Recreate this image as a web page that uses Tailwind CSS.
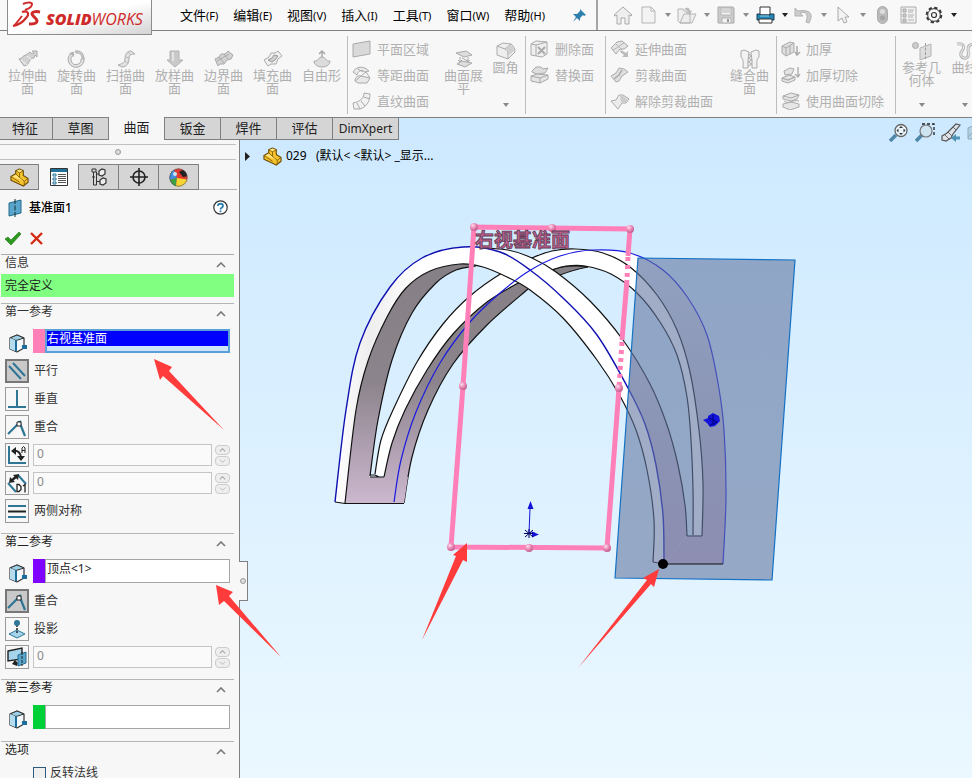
<!DOCTYPE html>
<html lang="zh-CN">
<head>
  <meta charset="UTF-8" />
  <meta name="viewport" content="width=device-width, initial-scale=1.0"/>
  <title>SOLIDWORKS - 029</title>
  <script src="https://cdn.jsdelivr.net/npm/@tailwindcss/browser@4"></script>
</head>
<body class="h-screen overflow-hidden flex flex-col bg-[#f7f7f7] font-['Noto_Sans','Noto_Sans_CJK_SC',sans-serif] text-[13px] text-[#222]">

  <!-- shared icons -->
  <svg class="hidden">
    <symbol id="i-part" viewBox="0 0 20 20"><path d="M1 9l5-3V3l4-2 4 2v5l5 3v4l-5 4L1 13z" fill="#f5c32c" stroke="#6b4d08" stroke-width="1.200" stroke-linejoin="round"/><path d="M6 3l4 2v5l5 4v5M10 5l4-2M1 9l9 6M15 14l4-3M6 6l4 4" fill="none" stroke="#8a640b"/><path d="M7 3l3-1.500L13 3l-3 1.500zM2.500 9L6 7l4 3.500 4 3.300z" fill="#ffe680"/></symbol>
    <symbol id="i-cube" viewBox="0 0 20 20"><path d="M2 5l7-3 7 3v10l-7 4-7-3z" fill="#f4f8fb" stroke="#333" stroke-width="1.200" stroke-linejoin="round"/><path d="M2 5l7-3 7 3-8 2.500z" fill="#9bd0e8" stroke="#333"/><path d="M2 5l5 2v11l-5-2z" fill="#b5dcee"/><path d="M8 7.500V18" stroke="#1b6e9c" stroke-width="2"/><path d="M14 12h5v4h-5z" fill="#1b6e9c"/></symbol>
    <symbol id="i-coin" viewBox="0 0 20 20"><path d="M1 17L14 4M12 4l6 15" stroke="#2f7596" stroke-width="2.200" fill="none"/><path d="M10 5h4v4h-4z" fill="#fff" stroke="#222"/></symbol>
    <symbol id="i-up" viewBox="0 0 10 6"><path d="M1 5l4-4 4 4" fill="none" stroke="#777" stroke-width="1.600"/></symbol>
    <symbol id="i-down" viewBox="0 0 10 6"><path d="M1 1l4 4 4-4" fill="none" stroke="#999" stroke-width="1.400"/></symbol>
    <symbol id="i-caret" viewBox="0 0 6 4"><path d="M0 0h6L3 4z" fill="currentColor"/></symbol>
    <symbol id="r-extrude" viewBox="0 0 20 18"><path d="M1 9c3 0 4-4 7-4l4-3 2 2 2-1-2-2h5v6l-2-2-1 3c-4 0-5 5-7 7l-3 1z" fill="#d2d2d2" stroke="#aaa"/><path d="M3 10l6 5M9 6l5 4" stroke="#f5f5f5"/></symbol>
    <symbol id="r-revolve" viewBox="0 0 20 18"><path d="M6 2a8 8 0 1 0 11 6l-3 1a5 5 0 1 1-7-4z" fill="#e2e2e2" stroke="#aaa"/><path d="M8 1c6-1 9 3 9 8l-2-1c0-3-2-5-6-5z" fill="#ccc" stroke="#b0b0b0"/><path d="M2 3l5-1v5z" fill="#b5b5b5"/></symbol>
    <symbol id="r-sweep" viewBox="0 0 20 18"><path d="M2 15c3-1 7-2 7-6 0-5 2-8 6-8l4 3c-4 0-6 1-6 4 0 5-2 9-7 9z" fill="#e2e2e2" stroke="#aaa"/><path d="M12 2l3 3M10 7l3 1M8 11l4 2" stroke="#bbb"/></symbol>
    <symbol id="r-loft" viewBox="0 0 20 18"><path d="M5 1h9v9h4l-8 7-8-7h3z" fill="#c9c9c9" stroke="#b2b2b2"/><path d="M8 2v9" stroke="#e4e4e4" stroke-width="2"/></symbol>
    <symbol id="r-bound" viewBox="0 0 20 18"><path d="M1 9l4-2 2-3 4 0 3-3 5 4-2 4-4 1-3 4-4 0-2 2z" fill="#d2d2d2" stroke="#aaa"/><path d="M5 7l5 6M10 4l5 6M3 11l12-7" stroke="#aaa"/></symbol>
    <symbol id="r-fill" viewBox="0 0 20 18"><path d="M1 10l5-3 2-4 4 0 3-2 4 5-4 3-2 5-5 0-3 2z" fill="#f1f1f1" stroke="#aaa"/><path d="M5 10l4-2 2-3 4 1-3 4-3 2z" fill="#d0d0d0" stroke="#999"/></symbol>
    <symbol id="r-free" viewBox="0 0 20 18"><path d="M10 10V2M7 4l3-3 3 3" stroke="#aaa" stroke-width="1.500" fill="none"/><path d="M2 11c4 1 4-4 8-4s4 5 8 4c0 3-3 6-8 6s-8-3-8-6z" fill="#dcdcdc" stroke="#aaa"/></symbol>
    <symbol id="r-planar" viewBox="0 0 20 18"><path d="M1 4l17-3v13L1 17z" fill="#d9d9d9" stroke="#aaa"/></symbol>
    <symbol id="r-offset" viewBox="0 0 20 18"><path d="M1 6c2-4 9-8 16-1l-4 1c-4-3-7-1-8 3zM3 15c0-4 3-6 6-5l9 2-3 5H6z" fill="#e8e8e8" stroke="#aaa"/><path d="M6 3l5 3M9 10l5-4 4 6M3 15l6-5" stroke="#aaa" fill="none"/></symbol>
    <symbol id="r-ruled" viewBox="0 0 20 18"><path d="M12 1l6 1c0 8-4 13-10 15H2l-1-6c6-1 11-4 11-10z" fill="#f2f2f2" stroke="#aaa"/><path d="M12 5l6 2M9 9l4 5M5 11l3 6" stroke="#aaa"/></symbol>
    <symbol id="r-flat" viewBox="0 0 20 18"><path d="M2 3l10-2 6 4-8 2zM3 14l5-3 10 2-7 4z" fill="#ddd" stroke="#aaa"/><path d="M6 7v5M14 7v5M4 10l2 2 2-2M12 10l2 2 2-2M8 8l6 3" fill="none" stroke="#aaa"/></symbol>
    <symbol id="r-fillet" viewBox="0 0 20 18"><path d="M1 4l6-3 8 1c3 2 4 5 4 8l-7 7-11-4z" fill="#eee" stroke="#aaa"/><path d="M1 4l8 3c3 1 3 5 3 10M9 7l6-5" stroke="#aaa" fill="none"/><path d="M9 7l6-4c2 1 3 4 3 6l-6 5c0-4 0-6-3-7z" fill="#d0d0d0"/></symbol>
    <symbol id="r-delete" viewBox="0 0 20 18"><path d="M1 4l5-3 11 1v12l-5 3-11-2z" fill="#efefef" stroke="#aaa"/><path d="M1 4l5 1 11-3M6 5v11" stroke="#aaa" fill="none"/><path d="M8 7l7 7M15 7l-7 7" stroke="#aaa" stroke-width="2"/></symbol>
    <symbol id="r-replace" viewBox="0 0 20 18"><path d="M1 10l6-2 11 1v4l-8 4-9-2z" fill="#e4e4e4" stroke="#aaa"/><path d="M2 5l4-4h5l2 2 5-1-3 5-8 1-5-2z" fill="#ddd" stroke="#aaa"/><path d="M1 10l9 2 8-3M10 12v5" fill="none" stroke="#aaa"/></symbol>
    <symbol id="r-extend" viewBox="0 0 20 18"><path d="M1 8l6-6 5-1 6 5-4 3-4 0-4 5z" fill="#e4e4e4" stroke="#aaa"/><path d="M11 10l5 3 2-2v6h-6l2-2-4-3z" fill="#bbb"/><path d="M6 4l6 6M3 10l5-3 6-4" stroke="#b5b5b5" fill="none"/></symbol>
    <symbol id="r-trim" viewBox="0 0 20 18"><path d="M1 10l5-3 3-5 5 1 4 3-6 4-3 5-3 1z" fill="#e0e0e0" stroke="#aaa"/><path d="M4 13l5-4 3-5" stroke="#aaa" fill="none" stroke-width="1.500"/></symbol>
    <symbol id="r-untrim" viewBox="0 0 20 18"><path d="M1 9l5-1 3-5 4 0 6 4-3 4-4 0-4 6z" fill="#ececec" stroke="#aaa"/><path d="M10 4l3 0 5 4-3 3-4-1z" fill="#ccc"/></symbol>
    <symbol id="r-knit" viewBox="0 0 20 20"><path d="M1 2l3-1 5 2c0 4-1 6-1 9v7H3c0-5 1-8-2-11zM19 2l-3-1-5 2c0 4 1 6 1 9v7h5c0-5-1-8 2-11z" fill="#f2f2f2" stroke="#aaa"/><path d="M8 5l4 2-4 2 4 2-4 2 4 2-4 2" stroke="#aaa" fill="none"/></symbol>
    <symbol id="r-thick" viewBox="0 0 20 18"><path d="M1 6l8-4 4 1v9l-8 4-4-3z" fill="#ddd" stroke="#aaa"/><path d="M1 6l4 2 8-5M5 8v8M9 6v8" stroke="#aaa" fill="none"/><path d="M16 6v9M14 12l2 3 3-3" stroke="#aaa" stroke-width="1.500" fill="none"/></symbol>
    <symbol id="r-thickcut" viewBox="0 0 20 18"><path d="M1 12l7-3 6 2v3l-7 3-6-2zM3 5l6-3 4 1-2 5-7 1z" fill="#e4e4e4" stroke="#aaa"/><path d="M17 1v10M14 8l3 3 2-3M1 12l6 2 7-3" stroke="#aaa" stroke-width="1.300" fill="none"/></symbol>
    <symbol id="r-cutwith" viewBox="0 0 20 18"><path d="M2 12l8-2 8 2v3l-9 3-7-3zM2 4l8-3 8 2-2 4-6 2-8-2z" fill="#e6e6e6" stroke="#aaa"/><path d="M3 9c5 4 9-2 15 0M2 4l8 2 8-3" stroke="#aaa" fill="none"/></symbol>
    <symbol id="r-ref" viewBox="0 0 20 18"><circle cx="3.500" cy="3.500" r="3" fill="#ccc" stroke="#aaa"/><path d="M8 6l11-4v12L8 18z" fill="#ddd" stroke="#b5b5b5"/><path d="M13.500 1v16" stroke="#999" stroke-dasharray="3 1.500"/></symbol>
    <symbol id="r-curve" viewBox="0 0 20 18"><path d="M2 2c7-1 8 3 5 7s0 8 4 7 2-6 2-9 2-5 6-5" fill="none" stroke="#b5b5b5" stroke-width="3"/><path d="M2 2c7-1 8 3 5 7s0 8 4 7 2-6 2-9 2-5 6-5" fill="none" stroke="#f7f7f7"/></symbol>
  </svg>

  <!-- title / menu bar -->
  <header class="relative z-20 flex shrink-0 h-[31px] items-center border-b border-[#808080] bg-[#f8f8f8]">
    <a href="#" aria-label="SOLIDWORKS" class="self-start ml-[7px] w-[145px] h-[35px] shrink-0 flex items-start border border-t-0 border-[#8c8c8c] bg-linear-to-br from-white from-50% to-[#d4d4d4] text-[#cf2a2a] pl-1">
      <svg class="w-[30px] h-[29px]" viewBox="0 0 30 29" fill="none" stroke="#cf2a2a"><path d="M11 4c4-2 9-2 9 0 0 3-4 5-7 6" stroke-width="2"/><path d="M10 12c6-2 8 2 4 6-3 4-8 7-13 8" stroke-width="2.200"/><path d="M10 16L2 26" stroke-width="2"/><path d="M28 12c-5-1-8 0-8 2s5 4 5 7c0 2-3 3-8 3" stroke-width="3"/></svg>
      <span class="mt-[9px] ml-1 font-['Open_Sans',sans-serif] italic text-[16px] leading-[21px]"><b class="font-extrabold">SOLID</b>WORKS</span>
    </a>
    <nav class="ml-[28px] flex gap-[15px] whitespace-nowrap text-black leading-[20px]">
      <a href="#">文件<span class="text-[11px]">(F)</span></a>
      <a href="#">编辑<span class="text-[11px]">(E)</span></a>
      <a href="#">视图<span class="text-[11px]">(V)</span></a>
      <a href="#">插入<span class="text-[11px]">(I)</span></a>
      <a href="#">工具<span class="text-[11px]">(T)</span></a>
      <a href="#">窗口<span class="text-[11px]">(W)</span></a>
      <a href="#">帮助<span class="text-[11px]">(H)</span></a>
    </nav>
    <button aria-label="固定菜单" class="ml-auto mr-[10px]"><svg class="size-[13px]" viewBox="0 0 13 13"><path d="M7 0l6 6-2 1-1-1-3 3 0 3-3-3-4 4 3-5-3-3 4 0 3-3z" fill="#2f7fae"/></svg></button>
    <div class="flex items-center h-full w-[376px] shrink-0 border-l-2 border-[#a5a5a5] pl-[15px] text-[#8c8c8c]">
      <button aria-label="主页" class="w-[20px] mr-[5px] flex justify-center"><svg class="size-[20px]" viewBox="0 0 20 20"><path d="M1 10l9-8 9 8-1 1-2-1v9h-4v-6H8v6H4v-9l-2 1z" fill="#eee" stroke="#aaa"/></svg></button>
      <button aria-label="新建" class="w-[20px] flex justify-center"><svg class="w-[15px] h-[18px]" viewBox="0 0 15 18"><path d="M1 1h9l4 4v12H1zM10 1v4h4" fill="#f3f3f3" stroke="#b5b5b5"/></svg></button>
      <button aria-label="新建选项" class="w-[19px] flex justify-center"><svg class="w-[6px] h-[4px]"><use href="#i-caret"/></svg></button>
      <button aria-label="打开" class="w-[20px] flex justify-center"><svg class="w-[20px] h-[18px]" viewBox="0 0 20 18"><path d="M1 3h5l1 2h6v12H3L1 15zM3 17L7 8h12l-4 9z" fill="#eee" stroke="#b5b5b5"/><path d="M7 3c4-3 6 0 6 2l2-1-2 5-5-3h3c0-2-2-2-4-3z" fill="#bbb"/></svg></button>
      <button aria-label="打开选项" class="w-[19px] flex justify-center"><svg class="w-[6px] h-[4px]"><use href="#i-caret"/></svg></button>
      <button aria-label="保存" class="w-[20px] flex justify-center"><svg class="size-[18px]" viewBox="0 0 18 18"><path d="M1 1h15l1 1v15H1z" fill="#ccc" stroke="#aaa"/><path d="M4 2h10v7H4zM5 12h9v5H5z" fill="#f3f3f3" stroke="#b5b5b5"/><path d="M5 4h8M5 6h8" stroke="#b5b5b5"/><path d="M10 13h2v3h-2z" fill="#999"/></svg></button>
      <button aria-label="保存选项" class="w-[19px] flex justify-center"><svg class="w-[6px] h-[4px]"><use href="#i-caret"/></svg></button>
      <button aria-label="打印" class="w-[20px] flex justify-center"><svg class="w-[19px] h-[18px]" viewBox="0 0 19 18"><path d="M4 1h10v8H4z" fill="#fff" stroke="#333"/><path d="M1 8h3v1h10V8h4v6H1z" fill="#2487b8" stroke="#1a3c50"/><path d="M3 13h13v4H3z" fill="#fff" stroke="#333"/><path d="M4 10h9" stroke="#8cd0ee"/></svg></button>
      <button aria-label="打印选项" class="w-[19px] flex justify-center text-[#222]"><svg class="w-[6px] h-[4px]"><use href="#i-caret"/></svg></button>
      <button aria-label="撤销" class="w-[20px] flex justify-center"><svg class="w-[20px] h-[17px]" viewBox="0 0 20 17"><path d="M1 1v8h8L6 6c6-2 9 1 6 9l3 1c5-9 1-14-11-12z" fill="#ccc" stroke="#b2b2b2"/></svg></button>
      <button aria-label="撤销选项" class="w-[19px] flex justify-center"><svg class="w-[6px] h-[4px]"><use href="#i-caret"/></svg></button>
      <button aria-label="选择" class="w-[20px] flex justify-center"><svg class="w-[13px] h-[18px]" viewBox="0 0 13 18"><path d="M1 1l11 10H8l2 5-3 1-2-5-4 3z" fill="#f3f3f3" stroke="#aaa"/></svg></button>
      <button aria-label="选择选项" class="w-[19px] flex justify-center"><svg class="w-[6px] h-[4px]"><use href="#i-caret"/></svg></button>
      <button aria-label="重建" class="w-[20px] flex justify-center"><svg class="w-[11px] h-[18px]" viewBox="0 0 11 18"><rect x=".5" y=".5" width="10" height="17" rx="5" fill="#bbb" stroke="#aaa"/><circle cx="5.500" cy="5.500" r="2.500" fill="#ddd"/><circle cx="5.500" cy="12" r="2.500" fill="#a5a5a5"/></svg></button>
      <button aria-label="文件属性" class="w-[32px] flex justify-center"><svg class="w-[17px] h-[18px]" viewBox="0 0 17 18"><path d="M1 1h15v16H1z" fill="#f2f2f2" stroke="#aaa"/><path d="M3 3h3v3H3zM3 8h3v3H3zM3 13h3v3H3z" fill="#ccc" stroke="#aaa"/><path d="M8 4h6M8 6h5M8 9h6M8 11h5M8 14h6" stroke="#b0b0b0"/></svg></button>
      <button aria-label="选项" class="w-[20px] flex justify-center"><svg class="size-[18px]" viewBox="0 0 18 18"><circle cx="9" cy="9" r="7.300" fill="none" stroke="#333" stroke-width="2" stroke-dasharray="3.300 2.430"/><circle cx="9" cy="9" r="6.300" fill="#f8f8f8" stroke="#333"/><circle cx="9" cy="9" r="2.500" fill="none" stroke="#333" stroke-width="1.200"/></svg></button>
      <button aria-label="更多选项" class="w-[19px] flex justify-center text-[#222]"><svg class="w-[6px] h-[4px]"><use href="#i-caret"/></svg></button>
    </div>
  </header>

  <!-- surfaces ribbon -->
  <section class="relative flex shrink-0 h-[87px] border-b border-[#808080] bg-[#f7f7f7] text-[#b0b0b0] leading-[13px] pt-[5px] pb-[3px] overflow-hidden">
    <div class="flex shrink-0 w-[348px] pl-[3px] pt-[14px] border-r border-[#bdbdbd]">
      <button class="flex flex-col items-center w-[49px] px-1"><svg class="w-[20px] h-[18px] mb-px shrink-0"><use href="#r-extrude"/></svg>拉伸曲面</button>
      <button class="flex flex-col items-center w-[49px] px-1"><svg class="w-[20px] h-[18px] mb-px shrink-0"><use href="#r-revolve"/></svg>旋转曲面</button>
      <button class="flex flex-col items-center w-[49px] px-1"><svg class="w-[20px] h-[18px] mb-px shrink-0"><use href="#r-sweep"/></svg>扫描曲面</button>
      <button class="flex flex-col items-center w-[49px] px-1"><svg class="w-[20px] h-[18px] mb-px shrink-0"><use href="#r-loft"/></svg>放样曲面</button>
      <button class="flex flex-col items-center w-[49px] px-1"><svg class="w-[20px] h-[18px] mb-px shrink-0"><use href="#r-bound"/></svg>边界曲面</button>
      <button class="flex flex-col items-center w-[49px] px-1"><svg class="w-[20px] h-[18px] mb-px shrink-0"><use href="#r-fill"/></svg>填充曲面</button>
      <button class="flex flex-col items-center w-[49px] px-1"><svg class="w-[20px] h-[18px] mb-px shrink-0"><use href="#r-free"/></svg>自由形</button>
    </div>
    <div class="flex shrink-0 w-[178px] pl-[4px] border-r border-[#bdbdbd]">
      <div class="flex flex-col w-[87px] whitespace-nowrap">
        <button class="flex items-center gap-[5px] h-[26px]"><svg class="w-[20px] h-[18px]"><use href="#r-planar"/></svg>平面区域</button>
        <button class="flex items-center gap-[5px] h-[26px]"><svg class="w-[20px] h-[18px]"><use href="#r-offset"/></svg>等距曲面</button>
        <button class="flex items-center gap-[5px] h-[26px]"><svg class="w-[20px] h-[18px]"><use href="#r-ruled"/></svg>直纹曲面</button>
      </div>
      <button class="flex flex-col items-center w-[49px] px-1 pt-[14px]"><svg class="w-[20px] h-[18px] mb-px shrink-0"><use href="#r-flat"/></svg>曲面展平</button>
      <button class="flex flex-col items-center w-[35px] pt-[6px]"><svg class="w-[20px] h-[18px] mb-px shrink-0"><use href="#r-fillet"/></svg>圆角<svg class="w-[6px] h-[4px] mt-auto mb-[7px] text-[#888]"><use href="#i-caret"/></svg></button>
    </div>
    <div class="flex flex-col shrink-0 w-[80px] pl-[4px] border-r border-[#bdbdbd] whitespace-nowrap">
      <button class="flex items-center gap-[5px] h-[26px]"><svg class="w-[20px] h-[18px]"><use href="#r-delete"/></svg>删除面</button>
      <button class="flex items-center gap-[5px] h-[26px]"><svg class="w-[20px] h-[18px]"><use href="#r-replace"/></svg>替换面</button>
    </div>
    <div class="flex shrink-0 w-[171px] pl-[4px] border-r border-[#bdbdbd]">
      <div class="flex flex-col w-[115px] whitespace-nowrap">
        <button class="flex items-center gap-[5px] h-[26px]"><svg class="w-[20px] h-[18px]"><use href="#r-extend"/></svg>延伸曲面</button>
        <button class="flex items-center gap-[5px] h-[26px]"><svg class="w-[20px] h-[18px]"><use href="#r-trim"/></svg>剪裁曲面</button>
        <button class="flex items-center gap-[5px] h-[26px]"><svg class="w-[20px] h-[18px]"><use href="#r-untrim"/></svg>解除剪裁曲面</button>
      </div>
      <button class="flex flex-col items-center w-[49px] px-1 pt-[13px]"><svg class="w-[20px] h-[20px] shrink-0"><use href="#r-knit"/></svg>缝合曲面</button>
    </div>
    <div class="flex flex-col shrink-0 w-[119px] pl-[4px] border-r border-[#bdbdbd] whitespace-nowrap">
      <button class="flex items-center gap-[5px] h-[26px]"><svg class="w-[20px] h-[18px]"><use href="#r-thick"/></svg>加厚</button>
      <button class="flex items-center gap-[5px] h-[26px]"><svg class="w-[20px] h-[18px]"><use href="#r-thickcut"/></svg>加厚切除</button>
      <button class="flex items-center gap-[5px] h-[26px]"><svg class="w-[20px] h-[18px]"><use href="#r-cutwith"/></svg>使用曲面切除</button>
    </div>
    <div class="flex shrink-0 pl-px">
      <button class="flex flex-col items-center w-[49px] px-1 pt-[6px]"><svg class="w-[20px] h-[18px] mb-px shrink-0"><use href="#r-ref"/></svg>参考几何体<svg class="w-[6px] h-[4px] mt-auto mb-[7px] text-[#888]"><use href="#i-caret"/></svg></button>
      <button class="flex flex-col items-center w-[37px] pt-[6px]"><svg class="w-[20px] h-[18px] mb-px shrink-0"><use href="#r-curve"/></svg>曲线<svg class="w-[6px] h-[4px] mt-auto mb-[7px] text-[#888]"><use href="#i-caret"/></svg></button>
    </div>
  </section>

  <main class="relative flex-1 min-h-0 flex flex-col bg-linear-to-b from-[#cde9ff] to-[#ebf8ff]">

    <!-- model canvas, curves are filled in by the script below -->
    <svg class="absolute left-0 top-0 w-[972px] h-[660px]" viewBox="0 118 972 660" role="img" aria-label="模型视图">
      <defs>
        <linearGradient id="face" gradientUnits="userSpaceOnUse" x1="0" y1="260" x2="0" y2="505"><stop offset="0" stop-color="#858085"/><stop offset=".5" stop-color="#8c848c"/><stop offset="1" stop-color="#cdb8d0"/></linearGradient>
        <linearGradient id="faceR" gradientUnits="userSpaceOnUse" x1="0" y1="260" x2="0" y2="565"><stop offset="0" stop-color="#d9e0f0"/><stop offset=".6" stop-color="#c6bfd2"/><stop offset="1" stop-color="#ccb0cb"/></linearGradient>
        <linearGradient id="band" gradientUnits="userSpaceOnUse" x1="335" y1="0" x2="420" y2="0"><stop offset="0" stop-color="#fff"/><stop offset=".4" stop-color="#eee"/><stop offset="1" stop-color="#fff"/></linearGradient>
        <radialGradient id="ball" cx=".35" cy=".3" r=".8"><stop offset="0" stop-color="#ffdcec"/><stop offset=".5" stop-color="#e884b2"/><stop offset="1" stop-color="#b85486"/></radialGradient>
        <clipPath id="inPlane"><path d="M638 258L795 260 772 580 615 578z"/></clipPath>
        <clipPath id="rightHalf"><path d="M573 200h300v400H573z"/></clipPath>
      </defs>

      <!-- second arch -->
      <path data-between="bInLeft bFace" fill="url(#face)"/>
      <path d="M551 270C562 266 575 265 588 267C577 269 568 272 560 275z" fill="#858085" stroke="#111"/>
      <path data-between="bOut bIn" fill="#fff"/>
      <path data-between="bOut bBlue" fill="#fff" clip-path="url(#rightHalf)"/>
      <g clip-path="url(#inPlane)">
        <path data-between="bOut bBlue" fill="url(#faceR)"/>
        <path d="M664 564V535.500H725L723 564z" fill="url(#faceR)"/>
      </g>
      <g fill="none" stroke="#111" stroke-width="1.200">
        <path data-curve="bOut"/>
        <path data-curve="bInLeft"/>
        <path data-curve="bInRight"/>
        <path data-curve="bFace"/>
      </g>

      <!-- first arch -->
      <path data-between="aInLeft aFace" fill="url(#face)"/>
      <path d="M345 503L349 477H408L404 503z" fill="url(#face)"/>
      <path data-between="aOut aIn" fill="url(#band)"/>
      <path data-between="aOutRight aBack" fill="#fff"/>
      <g clip-path="url(#inPlane)"><path data-between="aOutRight aBack" fill="url(#faceR)"/></g>
      <g fill="none" stroke="#111" stroke-width="1.200">
        <path data-curve="aIn"/>
        <path data-curve="aBack"/>
        <path data-curve="aFace"/>
        <path d="M335 502L345 503.500H404M370 477H384M370 475h5l4 2M653 562l11 2M687 536H702"/>
      </g>
      <path data-curve="aOut" fill="none" stroke="#1010b0" stroke-width="1.400"/>
      <path data-curve="bBlue" fill="none" stroke="#1a1ae0" stroke-width="1.200"/>

      <!-- new plane preview -->
      <path d="M638 258L795 260 772 580 615 578z" fill="#6377a0" fill-opacity=".6" stroke="#1571c4" stroke-width="1.200"/>
      <path d="M664 564H723" stroke="#111" stroke-width="1.200"/>
      <path d="M703 420l5-2v-2l5-3 6 3 1 5-5 5-5 1-3-4z" fill="#1212d8"/><path d="M709 418l8 4-7 3M713 415v10" stroke="#000080" fill="none"/>

      <!-- right plane -->
      <g fill="none" stroke="#ff80b8" stroke-width="5">
        <path d="M628 256L630 229 474 227 463 386 451 547 607 548 619 388M627 280L622 340"/>
        <path d="M628 257L627 280M622 342L619 388" stroke-dasharray="4 4"/>
      </g>
      <g fill="url(#ball)">
        <circle cx="474" cy="227" r="4"/><circle cx="552" cy="228" r="4"/><circle cx="630" cy="229" r="4"/><circle cx="463" cy="386" r="4"/><circle cx="619" cy="388" r="4"/><circle cx="451" cy="547" r="4"/><circle cx="529" cy="548" r="4"/><circle cx="607" cy="548" r="4"/>
      </g>
      <text x="475" y="247" font-size="19" font-weight="700" fill="#c0608f" stroke="#5d3a52" stroke-width=".8" class="font-['Noto_Sans_CJK_SC',sans-serif]">右视基准面</text>

      <!-- origin -->
      <g stroke="#1212d8" fill="#1212d8"><path d="M529 533L530 509M529 533h6"/><path d="M530.500 501l3 8h-6zM539 534.500l-7 3v-6z" stroke="none"/><path d="M525 530l8 7M533 530l-8 7M529 529v9M524 533.500h9" stroke="#000060"/></g>
      <circle cx="663" cy="564" r="5" fill="#000"/>
    </svg>

    <nav class="relative z-10 flex shrink-0 h-[22px] self-start leading-[21px]">
      <a href="#" class="w-[53px] pr-[2px] text-center bg-[#d5d5d5] border-r border-b border-[#808080]">特征</a>
      <a href="#" class="w-[56px] text-center bg-[#d5d5d5] border-r border-b border-[#808080]">草图</a>
      <a href="#" class="w-[55px] -mt-px text-center bg-[#f7f7f7]">曲面</a>
      <a href="#" class="w-[57px] text-center bg-[#d5d5d5] border-x border-b border-[#808080]">钣金</a>
      <a href="#" class="w-[56px] text-center bg-[#d5d5d5] border-r border-b border-[#808080]">焊件</a>
      <a href="#" class="w-[56px] text-center bg-[#d5d5d5] border-r border-b border-[#808080]">评估</a>
      <a href="#" class="w-[66px] text-center text-[12px] bg-[#d5d5d5] border-r border-b border-[#808080]">DimXpert</a>
    </nav>

    <div class="relative flex flex-1 min-h-0">
      <!-- property manager -->
      <aside class="relative shrink-0 w-[240px] border-r border-[#808080] bg-[#f7f7f7] text-[12px] leading-[18px] text-[#333]">
        <div class="h-full overflow-hidden">
          <div class="mt-[4px] mr-[3px] h-[16px] border-y border-[#c0c0c0] flex items-center justify-center"><span class="size-[6px] rounded-full border border-[#999] bg-[#ddd]"></span></div>
          <div class="mt-[4px] mr-[2px] h-[26px] flex border-b border-[#b5b5b5]">
            <button aria-label="设计树" class="w-[39px] h-[26px] flex items-center justify-center bg-[#d5d5d5] border border-l-0 border-[#808080]"><svg class="size-[19px]"><use href="#i-part"/></svg></button>
            <button aria-label="属性" class="w-[39px] h-[26px] flex items-center justify-center bg-[#f7f7f7]"><svg class="w-[18px] h-[18px]" viewBox="0 0 18 18"><path d="M.5.5h17v17H.5z" fill="#fff" stroke="#333"/><path d="M1 1h16v3H1z" fill="#1f6f98"/><path d="M3 6h3v2H3zM3 10h3v2H3zM3 14h3v2H3z" fill="#fff" stroke="#1f6f98"/><path d="M8 6.500h8M8 8.500h8M8 10.500h8M8 12.500h8M8 14.500h8" stroke="#555"/></svg></button>
            <button aria-label="配置" class="w-[41px] h-[26px] flex items-center justify-center bg-[#d5d5d5] border border-[#808080]"><svg class="w-[16px] h-[18px]" viewBox="0 0 16 18"><path d="M1 1h4v3H1zM2.500 4v13M5.500 4v13M2.500 17h3M5.500 6H8M5.500 13.500H9M1 9h3" fill="none" stroke="#333"/><path d="M8 3l3-2 3 1v4l-3 2-3-1zM9 12l3-2 3 1v4l-3 2-3-1z" fill="#eee" stroke="#333" stroke-width="1.200"/></svg></button>
            <button aria-label="DimXpert管理器" class="w-[39px] h-[26px] flex items-center justify-center bg-[#d5d5d5] border-y border-[#808080]"><svg class="size-[18px]" viewBox="0 0 18 18"><circle cx="9" cy="9" r="6" fill="none" stroke="#222" stroke-width="1.600"/><path d="M9 0v18M0 9h18" stroke="#222" stroke-width="1.600"/></svg></button>
            <button aria-label="外观" class="w-[41px] h-[26px] flex items-center justify-center bg-[#d5d5d5] border border-[#808080]"><svg class="size-[19px]" viewBox="0 0 19 19"><circle cx="9.500" cy="9.500" r="9" fill="#e23b2e"/><path d="M8 10L5 1.800A9 9 0 0 0 .8 12z" fill="#3f8fdc"/><path d="M.8 12L8 10 7 18.200A9 9 0 0 1 .8 12z" fill="#3da044"/><path d="M8 10l10.300 1.500A9 9 0 0 1 7 18.200z" fill="#f4d534"/><path d="M10 4l4-2.300a9 9 0 0 1 4.300 6.500L14 9z" fill="#222"/><circle cx="6" cy="6" r="2" fill="#cfe6fa"/><circle cx="9.500" cy="9.500" r="8.700" fill="none" stroke="#555" stroke-width=".6"/></svg></button>
          </div>
          <div class="h-[35px] flex items-center pl-[8px] pr-[11px]">
            <svg class="w-[15px] h-[18px]" viewBox="0 0 15 18"><path d="M1 4l12-3v13L1 17z" fill="#5aa5cb" stroke="#246a90"/><path d="M7 0v18" stroke="#133" stroke-dasharray="5 1.500"/></svg>
            <h1 class="ml-[6px] font-medium text-black">基准面1</h1>
            <button aria-label="帮助" class="ml-auto"><svg class="size-[15px]" viewBox="0 0 15 15"><circle cx="7.500" cy="7.500" r="6.700" fill="#fff" stroke="#333" stroke-width="1.200"/><path d="M5 6c0-3 5-3 5 0 0 1.500-2.500 1.500-2.500 3.500M7.500 10.500v1.700" fill="none" stroke="#2f7fae" stroke-width="1.800"/></svg></button>
          </div>
          <div class="h-[29px] flex items-center gap-[9px] pl-[5px] pb-[2px]">
            <button aria-label="确定"><svg class="w-[16px] h-[13px]" viewBox="0 0 16 13"><path d="M0 7l3-2 3 3 8-8 2 2L6 13z" fill="#2c9a1e" stroke="#1d6f14" stroke-width=".6"/></svg></button>
            <button aria-label="取消"><svg class="size-[13px]" viewBox="0 0 13 13"><path d="M1 1l11 11M12 1L1 12" stroke="#d42a12" stroke-width="2.400"/></svg></button>
          </div>

          <section class="ml-px mr-[5px] border-t border-[#b0a8b0] pb-[6px]">
            <button class="w-full h-[19px] flex items-start justify-between pl-[4px] pr-[8px] leading-[16px]">信息<svg class="w-[10px] h-[6px] mt-[7px]"><use href="#i-up"/></svg></button>
            <p class="h-[23px] leading-[23px] pl-[4px] bg-[#80ff80] text-[#222]">完全定义</p>
          </section>

          <section class="ml-px mr-[5px] border-t border-[#b5b5b5] pb-[10px]">
            <button class="w-full h-[25px] flex items-start justify-between pl-[4px] pr-[8px] leading-[16px]">第一参考<svg class="w-[10px] h-[6px] mt-[7px]"><use href="#i-up"/></svg></button>
            <div class="flex h-[24px] mr-[4px]">
              <svg class="w-[20px] h-[20px] ml-[7px] mr-[5px] mt-[4px]"><use href="#i-cube"/></svg>
              <span class="w-[12px] bg-[#ff80b8]"></span>
              <div class="flex-1 min-w-0 border-2 border-[#5a9fd8] bg-[#cfe6fa]"><input type="text" aria-label="第一参考实体" value="右视基准面" class="block w-full h-[15px] leading-[15px] bg-[#0000ff] text-white outline-none"></div>
            </div>
            <div class="mt-[6px] ml-[4px] flex flex-col gap-1">
              <button class="flex items-center gap-[5px] h-[24px]"><span class="size-[24px] border-2 border-[#777] bg-[#c9c9c9]"><svg class="size-[20px]" viewBox="0 0 20 20"><path d="M2 5l12 13M6 2l12 13" stroke="#2f7596" stroke-width="2"/></svg></span>平行</button>
              <button class="flex items-center gap-[5px] h-[24px]"><span class="size-[24px] border border-[#999] p-px"><svg class="size-[20px]" viewBox="0 0 20 20"><path d="M1 18h18M10 1v17" stroke="#2f7596" stroke-width="2"/></svg></span>垂直</button>
              <button class="flex items-center gap-[5px] h-[24px]"><span class="size-[24px] border border-[#999] p-px"><svg class="size-[20px]"><use href="#i-coin"/></svg></span>重合</button>
              <div class="flex items-center h-[24px]">
                <button aria-label="两面夹角" class="size-[24px] border border-[#999] p-px"><svg class="size-[20px]" viewBox="0 0 20 20"><path d="M2 1v17h17" fill="none" stroke="#2f7596" stroke-width="2"/><path d="M6 6c5-1 8 2 8 7" fill="none" stroke="#222" stroke-width="2"/><path d="M4 6l5-4v8zM14 16l-4-5h8z" fill="#222"/><path d="M15 8V3l1.500-1.500L18 3v5M15 5.500h3" fill="none" stroke="#222"/></svg></button>
                <input type="text" aria-label="角度" value="0" class="ml-[4px] w-[179px] h-[22px] pl-[3px] pb-[4px] border border-[#c5c5c5] bg-[#fafafa] text-[#888]">
                <span class="ml-[3px] flex flex-col gap-px"><button aria-label="增加角度" class="w-[15px] h-[10px] rounded-sm border border-[#ccc] bg-[#eee] flex items-center justify-center"><svg class="w-[7px] h-[4px] opacity-60" viewBox="0 0 10 6"><use href="#i-up"/></svg></button><button aria-label="减少角度" class="w-[15px] h-[10px] rounded-sm border border-[#ccc] bg-[#eee] flex items-center justify-center"><svg class="w-[7px] h-[4px] opacity-60"><use href="#i-down"/></svg></button></span>
              </div>
              <div class="flex items-center h-[24px]">
                <button aria-label="偏移距离" class="size-[24px] border border-[#999] p-px"><svg class="size-[20px]" viewBox="0 0 20 20"><path d="M1 10l8 9M11 2l8 9" stroke="#2f7596" stroke-width="2"/><path d="M4 8l6-5" stroke="#222" stroke-width="2.500"/><path d="M2 10l1-6 5 5zM12 1l-1 6-5-5z" fill="#222"/><path d="M10 11.500v7h2l2-2v-3l-2-2zM16 13l2-1.500v8" fill="#fff" stroke="#222" stroke-width="1.300"/></svg></button>
                <input type="text" aria-label="距离" value="0" class="ml-[4px] w-[179px] h-[22px] pl-[3px] pb-[4px] border border-[#c5c5c5] bg-[#fafafa] text-[#888]">
                <span class="ml-[3px] flex flex-col gap-px"><button aria-label="增加距离" class="w-[15px] h-[10px] rounded-sm border border-[#ccc] bg-[#eee] flex items-center justify-center"><svg class="w-[7px] h-[4px] opacity-60"><use href="#i-up"/></svg></button><button aria-label="减少距离" class="w-[15px] h-[10px] rounded-sm border border-[#ccc] bg-[#eee] flex items-center justify-center"><svg class="w-[7px] h-[4px] opacity-60"><use href="#i-down"/></svg></button></span>
              </div>
              <button class="flex items-center gap-[5px] h-[24px]"><span class="size-[24px] border border-[#999] p-px"><svg class="size-[20px]" viewBox="0 0 20 20"><path d="M1 5h18M1 16h18" stroke="#2f7596" stroke-width="2"/><path d="M1 10.500h18" stroke="#222" stroke-width="2"/></svg></span>两侧对称</button>
            </div>
          </section>

          <section class="ml-px mr-[5px] border-t border-[#b5b5b5] pb-[10px]">
            <button class="w-full h-[25px] flex items-start justify-between pl-[4px] pr-[8px] leading-[16px] text-[#222]">第二参考<svg class="w-[10px] h-[6px] mt-[7px]"><use href="#i-up"/></svg></button>
            <div class="flex h-[24px] mr-[4px]">
              <svg class="w-[20px] h-[20px] ml-[7px] mr-[5px] mt-[4px]"><use href="#i-cube"/></svg>
              <span class="w-[12px] bg-[#8000ff]"></span>
              <input type="text" aria-label="第二参考实体" value="顶点&lt;1&gt;" class="flex-1 min-w-0 border border-[#a5a5a5] bg-white pl-px pb-[4px] text-[#222]">
            </div>
            <div class="mt-[6px] ml-[4px] flex flex-col gap-1">
              <button class="flex items-center gap-[5px] h-[24px]"><span class="size-[24px] border-2 border-[#777] bg-[#c9c9c9]"><svg class="size-[20px]"><use href="#i-coin"/></svg></span>重合</button>
              <button class="flex items-center gap-[5px] h-[24px]"><span class="size-[24px] border border-[#999] p-px"><svg class="size-[20px]" viewBox="0 0 20 20"><path d="M2 15l8-4 8 4-8 4z" fill="#a6d4ea" stroke="#2f7596"/><path d="M10 6v9" stroke="#222" stroke-width="1.500" stroke-dasharray="2 1"/><circle cx="10" cy="4" r="3" fill="#2f7596"/></svg></span>投影</button>
              <div class="flex items-center h-[24px]">
                <button aria-label="平行于屏幕" class="size-[24px] border border-[#999] p-px"><svg class="size-[20px]" viewBox="0 0 20 20"><path d="M1 4l14-3v11L1 14z" fill="#a6d4ea" stroke="#222" stroke-width="1.400"/><path d="M5 17l3-4 3 3-1 3z" fill="#222"/><path d="M11 8l8-3v11l-8 3z" fill="#5aa5cb" stroke="#246a90"/><path d="M15 5v14" stroke="#222" stroke-dasharray="3 1"/></svg></button>
                <input type="text" aria-label="屏幕偏移" value="0" class="ml-[4px] w-[179px] h-[22px] pl-[3px] pb-[4px] border border-[#c5c5c5] bg-[#fafafa] text-[#888]">
                <span class="ml-[3px] flex flex-col gap-px"><button aria-label="增加偏移" class="w-[15px] h-[10px] rounded-sm border border-[#ccc] bg-[#eee] flex items-center justify-center"><svg class="w-[7px] h-[4px] opacity-60"><use href="#i-up"/></svg></button><button aria-label="减少偏移" class="w-[15px] h-[10px] rounded-sm border border-[#ccc] bg-[#eee] flex items-center justify-center"><svg class="w-[7px] h-[4px] opacity-60"><use href="#i-down"/></svg></button></span>
              </div>
            </div>
          </section>

          <section class="ml-px mr-[5px] border-t border-[#b5b5b5] pb-[12px]">
            <button class="w-full h-[25px] flex items-start justify-between pl-[4px] pr-[8px] leading-[16px] text-[#222]">第三参考<svg class="w-[10px] h-[6px] mt-[7px]"><use href="#i-up"/></svg></button>
            <div class="flex h-[24px] mr-[4px]">
              <svg class="w-[20px] h-[20px] ml-[7px] mr-[5px] mt-[4px]"><use href="#i-cube"/></svg>
              <span class="w-[12px] bg-[#00d038]"></span>
              <input type="text" aria-label="第三参考实体" class="flex-1 min-w-0 border border-[#a5a5a5] bg-white">
            </div>
          </section>

          <section class="ml-px mr-[5px] border-t border-[#b5b5b5]">
            <button class="w-full h-[22px] flex items-start justify-between pl-[4px] pr-[8px] leading-[16px] text-[#222]">选项<svg class="w-[10px] h-[6px] mt-[7px]"><use href="#i-up"/></svg></button>
            <label class="flex items-center gap-[4px] pl-[32px]"><input type="checkbox" class="appearance-none size-[13px] border border-[#2f5a80] bg-[#f0f0f0]">反转法线</label>
          </section>
        </div>
        <button aria-label="折叠面板" class="absolute left-[239px] top-[421px] w-[9px] h-[40px] border border-l-0 border-[#808080] bg-[#f7f7f7] flex items-center justify-center"><span class="size-[6px] rounded-full border border-[#999] bg-[#ddd]"></span></button>
      </aside>

      <div class="flex-1 flex items-start justify-between pl-[5px] text-black text-[12px] leading-[18px]">
        <button class="flex items-center mt-[6px] h-[20px] whitespace-pre"><svg class="w-[5px] h-[9px]" viewBox="0 0 5 9"><path d="M0 0l5 4.500L0 9z" fill="#222"/></svg><svg class="w-[19px] h-[19px] ml-[13px] mr-[4px]"><use href="#i-part"/></svg>029   (默认&lt; &lt;默认&gt; _显示...</button>
      </div>
    </div>

    <!-- heads-up view tools -->
    <div class="absolute right-0 top-[5px] flex gap-[6px] overflow-hidden w-[83px]">
      <button aria-label="整屏显示全图" class="shrink-0"><svg class="size-[20px]" viewBox="0 0 20 20"><path d="M1 18l6-6" stroke="#4e87a8" stroke-width="3.500"/><circle cx="12" cy="7.500" r="6" fill="#eaf4fb" stroke="#666" stroke-width="1.300"/><path d="M12 3l2 2h-4zM12 12l2-2h-4zM7.500 7.500l2-2v4zM16.500 7.500l-2-2v4z" fill="#333"/></svg></button>
      <button aria-label="局部放大" class="shrink-0"><svg class="size-[20px]" viewBox="0 0 20 20"><path d="M7 1h12v12" fill="none" stroke="#222" stroke-width="1.300" stroke-dasharray="3 2"/><path d="M1 18l6-6" stroke="#4e87a8" stroke-width="3.500"/><circle cx="11" cy="8" r="6" fill="#cfe4f1" stroke="#777" stroke-width="1.200"/></svg></button>
      <button aria-label="上一视图" class="shrink-0"><svg class="size-[20px]" viewBox="0 0 20 20"><path d="M1 13l5-3 9-9 4 1-7 9-2 4-5 3-4-1z" fill="#dde3e8" stroke="#555" stroke-width="1.200"/><path d="M4 12l4 4M7 9l4 4M12 4l3 3" stroke="#666"/><path d="M10 15l5-4v2.500h4v3h-4V19z" fill="#4e93b5"/></svg></button>
      <button aria-label="剖面视图" class="shrink-0"><svg class="size-[20px]" viewBox="0 0 20 20"><path d="M1 5l7-3 7 3v11H1z" fill="#b3d2e4" stroke="#8caabb"/><path d="M1 14l9-9M4 16l9-9" stroke="#8caabb"/></svg></button>
    </div>

    <!-- callout arrows -->
    <svg class="absolute z-20 left-0 top-0 w-[972px] h-[660px] pointer-events-none" viewBox="0 118 972 660" fill="#ff3b3b">
      <path d="M154 359L172 367 169 371 224 430 163 376 160 380z"/>
      <path d="M216 585L233 592 229 596 281 657 224 601 219 605z"/>
      <path d="M467 543V562L463 560 422 640 456 556 453 555z"/>
      <path d="M659 569L654 587 651 584 578 668 647 580 643 578z"/>
    </svg>
  </main>

  <script>
    // edge points of the two arches, left foot to right foot
    const edges = {
      aOut: [[335,502],[346,410],[360,343],[390,287],[422,258],[463,247],[500,252],[530,270],[563,298],[597,335],[628,388],[645,424],[656,465],[663,515],[664,564]],
      aIn: [[345,503],[356,410],[368,361],[387,317],[406,288],[430,271],[460,264],[483,267],[507,277],[530,290],[563,318],[597,360],[620,396],[636,430],[647,470],[654,520],[653,562]],
      aBack: [[480,248],[508,250],[532,258],[556,272],[590,301],[623,340],[650,384],[667,425],[678,465],[685,505],[687,536]],
      aFace: [[370,476],[378,420],[392,360],[412,313],[436,283],[456,270],[476,266]],
      bOut: [[375,474],[381,440],[393,410],[417,362],[443,324],[470,296],[502,273],[532,258],[552,251],[575,249],[603,253],[630,267],[657,295],[677,330],[690,372],[699,430],[703,483],[702,536]],
      bInLeft: [[384,477],[392,443],[405,410],[427,370],[453,334],[487,302],[520,282]],
      bInRight: [[552,270],[566,266],[585,266],[611,274],[637,293],[660,322],[677,355],[687,397],[691,440],[693,490],[693,535]],
      bFace: [[404,503],[412,457],[428,410],[453,364],[487,325],[528,289]],
      bBlue: [[394,502],[401,460],[416,412],[440,363],[470,322],[500,293],[529,271],[560,256],[593,250],[630,253],[663,270],[688,298],[707,335],[718,383],[724,430],[726,497],[723,564]],
    };
    edges.aInLeft = edges.aIn.slice(0, 8);
    edges.aOutRight = edges.aOut.slice(5);
    edges.bIn = edges.bInLeft.concat(edges.bInRight);

    // smooth line through all points
    function spline(pts, start = 'M') {
      let d = start + pts[0];
      for (let i = 0; i < pts.length - 1; i++) {
        const p0 = pts[i - 1] || pts[i], p1 = pts[i], p2 = pts[i + 1], p3 = pts[i + 2] || p2;
        d += 'C' + [
          p1[0] + (p2[0] - p0[0]) / 6, p1[1] + (p2[1] - p0[1]) / 6,
          p2[0] - (p3[0] - p1[0]) / 6, p2[1] - (p3[1] - p1[1]) / 6,
          p2[0], p2[1]
        ];
      }
      return d;
    }

    document.querySelectorAll('[data-curve]').forEach(el => {
      el.setAttribute('d', spline(edges[el.dataset.curve]));
    });
    document.querySelectorAll('[data-between]').forEach(el => {
      const [a, b] = el.dataset.between.split(' ');
      el.setAttribute('d', spline(edges[a]) + spline([...edges[b]].reverse(), 'L') + 'Z');
    });
  </script>
</body>
</html>
